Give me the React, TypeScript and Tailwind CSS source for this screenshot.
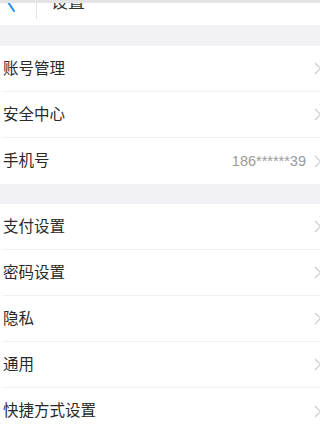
import { Fragment } from 'react';

type Row = { label: string; value?: string };

const GROUPS: Row[][] = [
  [{ label: '账号管理' }, { label: '安全中心' }, { label: '手机号', value: '186******39' }],
  [
    { label: '支付设置' },
    { label: '密码设置' },
    { label: '隐私' },
    { label: '通用' },
    { label: '快捷方式设置' },
  ],
];

function Chevron() {
  return (
    <svg width="8" height="13" viewBox="0 0 8 13" className="shrink-0 -mr-[2px] ml-[8px]">
      <path d="M1 1 L6.5 6.5 L1 12" fill="none" stroke="#cacace" strokeWidth="1.1" />
    </svg>
  );
}

function SettingRow({ row, last }: { row: Row; last: boolean }) {
  return (
    <div className="pl-[3px] bg-white">
      <div
        className={`h-[46px] flex items-center ${last ? '' : 'border-b border-[#efefef]'}`}
      >
        <span className="text-[15.5px] text-[#2a2a2a] flex-1 leading-none">{row.label}</span>
        {row.value && <span className="text-[14.5px] text-[#9a9a9a] leading-none">{row.value}</span>}
        <Chevron />
      </div>
    </div>
  );
}

export default function App() {
  return (
    <div
      className="w-[320px] h-[428px] overflow-hidden bg-[#f2f2f6]"
      style={{ fontFamily: '"Liberation Sans", "Noto Sans CJK SC", sans-serif' }}
    >
      <div className="h-[3px] bg-[#e4e4e6]" />
      {/* nav bar, scrolled mostly out of view */}
      <div className="h-[22px] bg-white overflow-hidden">
        <div className="h-[30px] -mt-[16px] flex items-center">
          <svg width="10" height="20" viewBox="0 0 10 20" className="ml-[6px] shrink-0">
            <path d="M8 1 L2 10 L8 19" fill="none" stroke="#2b8cf0" strokeWidth="2" strokeLinecap="round" />
          </svg>
          <div className="ml-[20px] w-px h-[26px] mt-[8px] bg-[#e2e2e2]" />
          <span className="ml-[14px] text-[17px] text-[#333] leading-none">设置</span>
        </div>
      </div>
      {GROUPS.map((group, gi) => (
        <Fragment key={gi}>
          <div className={gi === 0 ? 'h-[21px]' : 'h-[20px]'} />
          {group.map((row, ri) => (
            <SettingRow key={row.label} row={row} last={ri === group.length - 1} />
          ))}
        </Fragment>
      ))}
    </div>
  );
}
